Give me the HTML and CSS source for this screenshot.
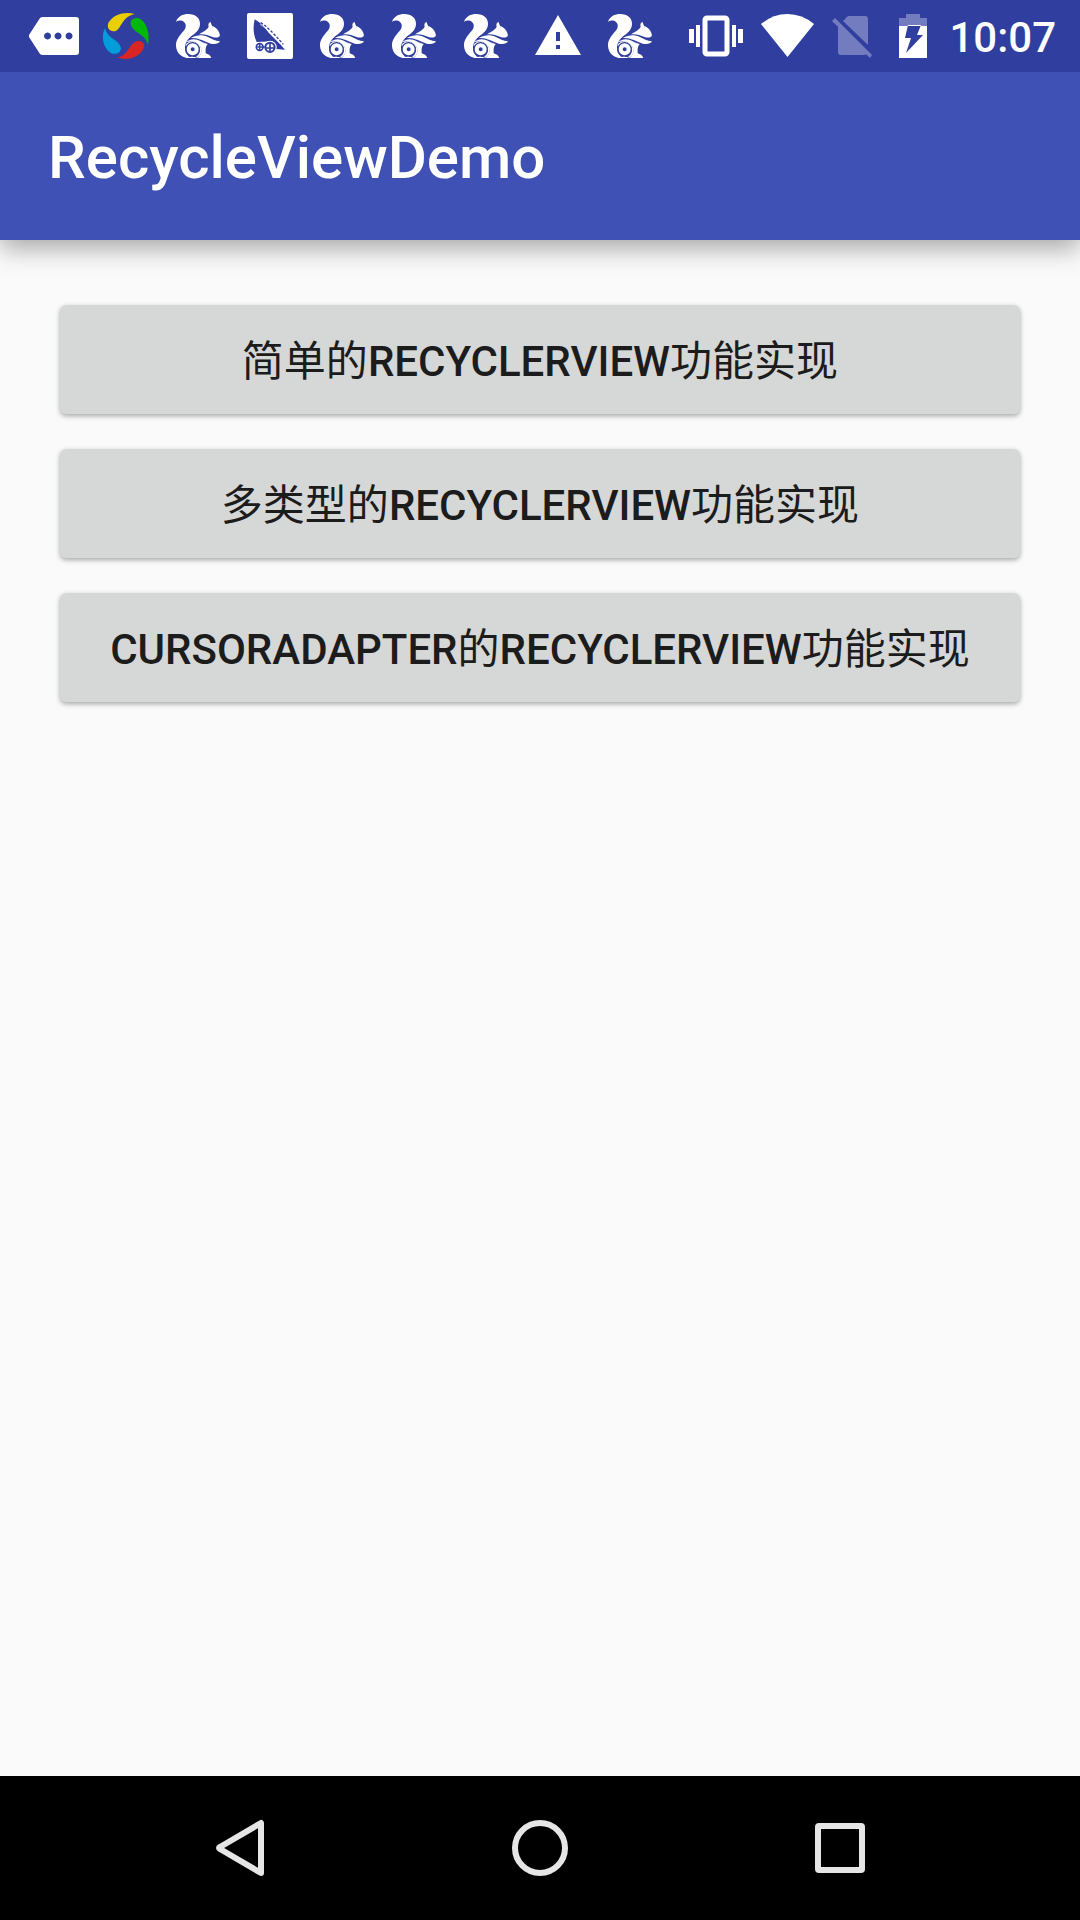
FILE: index.html
```
<!DOCTYPE html>
<html lang="zh-CN">
<head>
<meta charset="utf-8">
<meta name="viewport" content="width=device-width, initial-scale=1">
<title>RecycleViewDemo</title>
<link rel="stylesheet" href="styles.css">
</head>
<body>
<svg class="sprite" aria-hidden="true">
  <symbol id="squirrel" viewBox="486 0 216 216">
    <path fill="#fff" d="M528 65C534 49 548 42 565 42C586 42 600 54 600 71C600 88 588 98 577 106C565 115 556 126 555 142C554 157 561 167 573 174H560C540 171 528 154 528 136C528 119 539 107 550 94C559 83 560 73 552 66C545 60 535 61 528 65Z"/>
    <path fill="#fff" d="M597 103C606 96 620 92 626 80L625 74C626 69 629 66 632 66L636 78C648 81 658 92 660 107C656 113 647 114 638 111C624 105 612 101 597 103Z"/>
    <path fill="#fff" d="M573 114C588 104 608 103 622 110C635 117 646 122 660 124C656 132 644 134 632 131C614 124 592 112 573 114Z"/>
    <path fill="#fff" d="M558 127C571 115 589 116 602 124C610 129 617 130 623 132C617 138 616 149 617 160C624 162 632 166 634 174H593C605 165 607 149 600 138C591 125 574 121 558 127Z"/>
    <path fill="none" stroke="#fff" stroke-width="5" d="M558 137C566 124 589 124 598 138C607 153 599 168 590 172"/>
    <circle cx="578" cy="148" r="22" fill="#303f9f"/>
    <circle cx="578" cy="148" r="12" fill="none" stroke="#fff" stroke-width="12"/>
    <path fill="#fff" d="M562 174C570 169 583 169 592 174Z"/>
  </symbol>
</svg>

<div class="status-bar">
  <div class="notifications">
    <svg class="notice" viewBox="0 0 72 72" role="img" aria-label="More notifications">
      <path fill="#fff" fill-rule="evenodd" d="M25 17H58Q61 17 61 20V52Q61 55 58 55H25Q23 55 22 54L11 37V35L22 18Q23 17 25 17ZM29.500 32.500a3.500 3.500 0 1 0 .1 0ZM40 32.500a3.500 3.500 0 1 0 .1 0ZM51 32.500a3.500 3.500 0 1 0 .1 0Z"/>
    </svg>
    <svg class="notice" viewBox="270 0 216 216" role="img" aria-label="App notification">
      <path fill="#ebce00" d="M404 42C376 34 342 42 326 67C319 81 327 94 341 94C365 94 360 52 404 42Z"/>
      <path fill="#00b807" d="M393 75C388 61 401 50 417 55C440 66 451 101 444 134C436 101 400 99 393 75Z"/>
      <path fill="#d92624" d="M352 172C386 168 387 127 413 123C429 121 437 134 430 147C416 174 379 184 352 172Z"/>
      <path fill="#009ddb" d="M315 84C320 116 361 120 363 145C362 160 346 166 331 158C309 142 302 109 315 84Z"/>
    </svg>
    <svg class="notice" viewBox="0 0 72 72" role="img" aria-label="UC notification"><use href="#squirrel"/></svg>
    <svg class="notice" viewBox="12 0 216 216" role="img" aria-label="Cannon notification">
      <rect x="51" y="39" width="138" height="138" rx="6" fill="#fff"/>
      <path fill="#303f9f" d="M74 58C92 68 106 84 116 98L150 132L165 149L138 147L128 124L80 126C69 103 69 80 74 58Z"/>
      <path fill="none" stroke="#303f9f" stroke-width="4" stroke-dasharray="8 5" d="M92 68C112 80 128 98 160 133"/>
      <path fill="none" stroke="#fff" stroke-width="2" d="M90 73C108 84 122 100 152 132"/>
      <circle cx="120" cy="142" r="20" fill="#fff"/>
      <circle cx="89" cy="141" r="15" fill="#fff"/>
      <g fill="none" stroke="#303f9f">
        <circle cx="89" cy="141" r="10" stroke-width="5"/>
        <path stroke-width="4" d="M89 132V150M82 141H104"/>
        <circle cx="120" cy="142" r="14" stroke-width="6"/>
        <path stroke-width="5" d="M120 130V154M108 144H132"/>
      </g>
    </svg>
    <svg class="notice" viewBox="0 0 72 72" role="img" aria-label="UC notification"><use href="#squirrel"/></svg>
    <svg class="notice" viewBox="0 0 72 72" role="img" aria-label="UC notification"><use href="#squirrel"/></svg>
    <svg class="notice" viewBox="0 0 72 72" role="img" aria-label="UC notification"><use href="#squirrel"/></svg>
    <svg class="notice" viewBox="0 0 72 72" role="img" aria-label="Warning">
      <path fill="#fff" fill-rule="evenodd" d="M36 15L59 55H13ZM34 32V41H38V32ZM34 45V49H38V45Z"/>
    </svg>
    <svg class="notice" viewBox="0 0 72 72" role="img" aria-label="UC notification"><use href="#squirrel"/></svg>
  </div>
  <div class="system">
    <svg class="sys-wide" viewBox="0 0 72 72" role="img" aria-label="Vibrate">
      <rect x="25" y="18" width="22" height="36" rx="2" fill="none" stroke="#fff" stroke-width="5"/>
      <path fill="#fff" d="M9 29h5v14H9ZM16 25h4v22h-4ZM52 25h4v22h-4ZM58 29h5v14h-5Z"/>
    </svg>
    <svg class="sys-wide" viewBox="0 0 72 72" role="img" aria-label="Wi-Fi">
      <path fill="#fff" d="M9 24Q21 14 35.500 14T62 24L35.500 57Z"/>
    </svg>
    <svg class="sys-narrow" viewBox="0 0 60 72" role="img" aria-label="No SIM">
      <path fill="#fff" fill-opacity=".32" d="M24 16H41Q44 16 44 19V45L19 21ZM14 26L42 54Q41 55 40 55H17Q14 55 14 52ZM11 18L48 55L46 58L8 21Z"/>
    </svg>
    <svg class="sys-narrow" viewBox="0 0 60 72" role="img" aria-label="Battery charging">
      <path fill="#fff" fill-opacity=".32" d="M22 14H36V18H43V26H15V18H22Z"/>
      <path fill="#fff" fill-rule="evenodd" d="M15 26H43V58H15ZM24 25L21 38H27L22 53L39 35H33L37 25Z"/>
    </svg>
    <time class="clock" datetime="10:07">10:07</time>
  </div>
</div>

<header class="app-bar">
  <h1 class="title">RecycleViewDemo</h1>
</header>

<main class="content">
  <button class="action" type="button">简单的<span class="latin">RecyclerView</span>功能实现</button>
  <button class="action" type="button">多类型的<span class="latin">RecyclerView</span>功能实现</button>
  <button class="action" type="button"><span class="latin">CursorAdapter</span>的<span class="latin">RecyclerView</span>功能实现</button>
</main>

<nav class="nav-bar" aria-label="System navigation">
  <button class="nav-key" type="button" aria-label="Back">
    <svg class="nav-icon" viewBox="0 0 72 72"><path d="M57 11V61L16 37Q14 36 16 35Z"/></svg>
  </button>
  <button class="nav-key" type="button" aria-label="Home">
    <svg class="nav-icon" viewBox="0 0 72 72"><circle cx="36" cy="36" r="25"/></svg>
  </button>
  <button class="nav-key" type="button" aria-label="Overview">
    <svg class="nav-icon" viewBox="0 0 72 72"><rect x="14" y="14" width="44" height="44" rx="1"/></svg>
  </button>
</nav>
</body>
</html>
```

FILE: styles.css
```
* {
  box-sizing: border-box;
}

body {
  display: flex;
  flex-direction: column;
  min-height: 100vh;
  margin: 0;
  background: #fafafa;
  font-family: Roboto, "Noto Sans CJK SC", sans-serif;
}

.sprite {
  position: absolute;
  width: 0;
  height: 0;
}

/* Stacked above the app bar so that its shadow only falls downwards. */
.status-bar {
  position: relative;
  z-index: 1;
  display: flex;
  justify-content: space-between;
  height: 72px;
  padding: 0 24px 0 18px;
  background: #303f9f;
}

.notifications,
.system {
  display: flex;
  align-items: center;
}

.notice,
.sys-wide {
  width: 72px;
  height: 72px;
}

.sys-narrow {
  width: 60px;
  height: 72px;
}

.clock {
  margin-left: 5px;
  padding-top: 4px;
  color: #fff;
  font-size: 42px;
  font-weight: 500;
  line-height: 72px;
}

.app-bar {
  display: flex;
  align-items: center;
  height: 168px;
  padding: 4px 48px 0;
  background: #3f51b5;
  box-shadow: 0 8px 24px rgba(0, 0, 0, 0.34);
}

.title {
  margin: 0;
  color: #fff;
  font-size: 60px;
  font-weight: 500;
  line-height: 72px;
}

.content {
  display: flex;
  flex: 1;
  flex-direction: column;
  gap: 35px;
  padding: 65px 60px;
}

.action {
  height: 109px;
  padding: 4px 24px 0;
  border: 0;
  border-radius: 6px;
  background: #d6d7d7;
  box-shadow: 0 2px 5px rgba(0, 0, 0, 0.34);
  color: #1c1c1c;
  font-family: inherit;
  font-size: 42px;
  font-weight: 400;
  line-height: 60px;
  text-transform: uppercase;
}

.latin {
  font-weight: 500;
}

.nav-bar {
  display: flex;
  height: 144px;
  padding: 0 90px;
  background: #000;
}

.nav-key {
  display: flex;
  flex: 1;
  align-items: center;
  justify-content: center;
  padding: 0;
  border: 0;
  background: none;
}

.nav-icon {
  width: 72px;
  height: 72px;
  fill: none;
  stroke: #e6e6e6;
  stroke-width: 6;
  stroke-linejoin: round;
}
```
